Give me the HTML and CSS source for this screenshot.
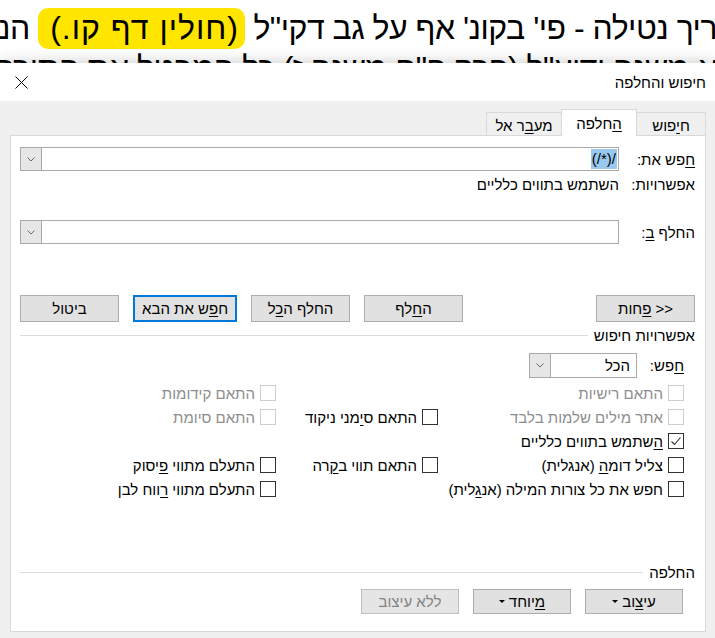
FILE: index.html
```html
<!DOCTYPE html>
<html lang="he" dir="rtl">

<head>
  <meta charset="UTF-8">
  <meta name="viewport" content="width=device-width, initial-scale=1">
  <title>חיפוש והחלפה</title>
  <link rel="stylesheet" href="styles.css">
</head>

<body>
  <!-- document text behind the dialog -->
  <div class="doc">
    <p class="doc_line">ריך נטילה - פי' בקונ' אף על גב דקי"ל <span class="doc_mark">(חולין דף קו.)</span> הנה אמרו</p>
    <p class="doc_line">א משנה ידוע"ל (פרק פ"ח משנה ז) כל המבטל את התורה מעושר</p>
  </div>

  <div class="fr_dialog">
    <div class="fr_titlebar">
      <span class="fr_title">חיפוש והחלפה</span>
      <span class="fr_close">
        <svg width="13" height="13" viewBox="0 0 13 13">
          <path d="M0.5 0.5 L12.5 12.5 M12.5 0.5 L0.5 12.5" stroke="#000" stroke-width="1" fill="none" />
        </svg>
      </span>
    </div>

    <div class="fr_body">
      <div class="fr_tabs">
        <div class="fr_tab"><span>ח<u>י</u>פוש</span></div>
        <div class="fr_tab fr_tab_active"><span><u>ה</u>חלפה</span></div>
        <div class="fr_tab"><span>מע<u>ב</u>ר אל</span></div>
      </div>

      <div class="fr_panel">
        <div class="fr_row fr_row_find">
          <span class="fr_label"><u>ח</u>פש את:</span>
          <div class="fr_combo fr_combo_wide">
            <span class="fr_combo_text"><span class="fr_selected" dir="ltr">(/*)/</span></span>
            <span class="fr_combo_btn">
              <svg width="8" height="5" viewBox="0 0 8 5">
                <polyline points="0.5,0.5 4,4 7.5,0.5" stroke="#6a6a6a" stroke-width="1" fill="none" />
              </svg>
            </span>
          </div>
        </div>

        <div class="fr_row fr_row_options">
          <span class="fr_label">אפשרויות:</span>
          <span class="fr_value">השתמש בתווים כלליים</span>
        </div>

        <div class="fr_row fr_row_replace">
          <span class="fr_label">החלף <u>ב</u>:</span>
          <div class="fr_combo fr_combo_wide">
            <span class="fr_combo_text"></span>
            <span class="fr_combo_btn">
              <svg width="8" height="5" viewBox="0 0 8 5">
                <polyline points="0.5,0.5 4,4 7.5,0.5" stroke="#6a6a6a" stroke-width="1" fill="none" />
              </svg>
            </span>
          </div>
        </div>

        <div class="fr_buttons fr_buttons_main">
          <button class="fr_btn fr_btn_less"><span>&lt;&lt; <u>פ</u>חות</span></button>
          <button class="fr_btn"><span>ה<u>ח</u>לף</span></button>
          <button class="fr_btn"><span>החלף ה<u>כ</u>ל</span></button>
          <button class="fr_btn fr_btn_focus"><span>ח<u>פ</u>ש את הבא</span></button>
          <button class="fr_btn"><span>ביטול</span></button>
        </div>

        <div class="fr_section fr_section_search">
          <span>אפשרויות חיפוש</span>
          <span class="fr_section_line"></span>
        </div>

        <div class="fr_search_opts">
          <div class="fr_row fr_row_dir">
            <span class="fr_label fr_label_short"><u>ח</u>פש:</span>
            <div class="fr_combo fr_combo_small">
              <span class="fr_combo_text">הכל</span>
              <span class="fr_combo_btn">
                <svg width="8" height="5" viewBox="0 0 8 5">
                  <polyline points="0.5,0.5 4,4 7.5,0.5" stroke="#6a6a6a" stroke-width="1" fill="none" />
                </svg>
              </span>
            </div>
          </div>

          <div class="fr_checks">
            <div class="fr_check fr_disabled"><span class="fr_box"></span><span>התאם רישיות</span></div>
            <div></div>
            <div class="fr_check fr_disabled"><span class="fr_box"></span><span>התאם קידומות</span></div>

            <div class="fr_check fr_disabled"><span class="fr_box"></span><span>אתר מילים שלמות בלבד</span></div>
            <div class="fr_check"><span class="fr_box"></span><span>התאם ס<u>י</u>מני ניקוד</span></div>
            <div class="fr_check fr_disabled"><span class="fr_box"></span><span>התאם סיומת</span></div>

            <div class="fr_check">
              <span class="fr_box">
                <svg width="14" height="14" viewBox="0 0 14 14">
                  <polyline points="2.5,7.5 5.5,10.5 11.5,3.5" stroke="#333" stroke-width="1.1" fill="none" />
                </svg>
              </span>
              <span><u>ה</u>שתמש בתווים כלליים</span>
            </div>
            <div></div>
            <div></div>

            <div class="fr_check"><span class="fr_box"></span><span>צליל דומ<u>ה</u> (אנגלית)</span></div>
            <div class="fr_check"><span class="fr_box"></span><span>התאם תווי ב<u>ק</u>רה</span></div>
            <div class="fr_check"><span class="fr_box"></span><span>התעלם מתווי <u>פ</u>יסוק</span></div>

            <div class="fr_check"><span class="fr_box"></span><span>חפש את כל צורות המילה (אנ<u>ג</u>לית)</span></div>
            <div></div>
            <div class="fr_check"><span class="fr_box"></span><span>התעלם מתווי <u>ר</u>ווח לבן</span></div>
          </div>
        </div>

        <div class="fr_section fr_section_replace">
          <span>החלפה</span>
          <span class="fr_section_line"></span>
        </div>

        <div class="fr_buttons fr_buttons_format">
          <button class="fr_btn"><span>עי<u>צ</u>וב</span><span class="fr_caret"></span></button>
          <button class="fr_btn"><span><u>מ</u>יוחד</span><span class="fr_caret"></span></button>
          <button class="fr_btn fr_btn_disabled"><span>ללא עיצוב</span></button>
        </div>
      </div>
    </div>
  </div>
</body>

</html>
```

FILE: styles.css
```css
* {
  box-sizing: border-box;
}

body {
  margin: 0;
  background: #fff;
  font-family: "Liberation Sans", "DejaVu Sans", sans-serif;
  overflow: hidden;
}

/* document behind the dialog */

.doc {
  height: 63px;
  overflow: hidden;
  padding-top: 8px;
}

.doc_line {
  margin: 0 -2px 0 0;
  font-size: 32px;
  line-height: 40px;
  letter-spacing: -0.5px;
  white-space: nowrap;
  color: #000;
}

.doc_mark {
  background: #ffe500;
  border-radius: 10px;
  padding: 2px 6px 3px 12px;
  letter-spacing: 1px;
}

/* dialog */

.fr_dialog {
  position: relative;
  background: #f0f0f0;
  box-shadow: 0 -2px 12px rgba(0, 0, 0, 0.18);
  font-size: 15px;
  color: #000;
}

.fr_titlebar {
  height: 38px;
  background: #fff;
  display: flex;
  align-items: center;
  justify-content: space-between;
  padding: 0 9px 0 15px;
}

.fr_close {
  display: flex;
}

.fr_body {
  padding: 8px 9px 6px 10px;
}

u {
  text-decoration-thickness: 1px;
  text-underline-offset: 2px;
}

/* tabs */

.fr_tabs {
  display: flex;
  align-items: flex-end;
  margin-bottom: -1px;
  position: relative;
  z-index: 1;
}

.fr_tab {
  width: 76px;
  height: 23px;
  margin-bottom: 1px;
  margin-right: -1px;
  border: 1px solid #d9d9d9;
  border-bottom: none;
  background: #f0f0f0;
  display: flex;
  align-items: center;
  justify-content: center;
  padding-top: 2px;
}

.fr_tab:first-child {
  width: 70px;
  margin-right: 0;
}

.fr_tab_active {
  height: 27px;
  margin-bottom: 0;
  background: #fff;
  position: relative;
  z-index: 1;
  padding-top: 0;
}

/* panel */

.fr_panel {
  height: 497px;
  background: #fff;
  border: 1px solid #d9d9d9;
  padding: 0 10px 0 9px;
}

.fr_row {
  display: flex;
  align-items: center;
}

.fr_label {
  width: 76px;
  flex-shrink: 0;
}

.fr_row_find {
  margin-top: 11px;
  height: 24px;
}

.fr_row_options {
  margin-top: 3px;
  height: 20px;
}

.fr_row_replace {
  margin-top: 26px;
  height: 24px;
}

.fr_combo {
  display: flex;
  height: 100%;
  border: 1px solid #a9a9a9;
  background: #fff;
}

.fr_combo_wide {
  flex: 1;
}

.fr_combo_text {
  flex: 1;
  display: flex;
  align-items: center;
  padding-right: 1px;
  white-space: nowrap;
}

.fr_selected {
  background: #99c9ef;
  padding: 1px 1px 2px;
}

.fr_combo_btn {
  width: 21px;
  background: #e6e6e6;
  border-right: 1px solid #a9a9a9;
  display: flex;
  align-items: center;
  justify-content: center;
}

/* buttons */

.fr_buttons {
  display: flex;
  gap: 14px;
}

.fr_buttons_main {
  margin-top: 51px;
}

.fr_btn {
  width: 99px;
  height: 27px;
  padding: 0;
  background: #e1e1e1;
  border: 1px solid #adadad;
  font-family: inherit;
  font-size: 15px;
  color: #000;
  display: flex;
  align-items: center;
  justify-content: center;
  gap: 4px;
  white-space: nowrap;
}

.fr_btn_less {
  margin-left: auto;
}

.fr_btn_focus {
  width: 104px;
  border: 2px solid #0078d7;
}

.fr_btn_disabled {
  color: #838383;
  border-color: #bfbfbf;
  background: #e5e5e5;
}

.fr_caret {
  width: 0;
  height: 0;
  border-left: 3px solid transparent;
  border-right: 3px solid transparent;
  border-top: 3px solid #000;
}

/* section headers */

.fr_section {
  display: flex;
  align-items: center;
  height: 18px;
}

.fr_section_line {
  flex: 1;
  height: 1px;
  background: #dcdcdc;
  margin-right: 6px;
}

.fr_section_search {
  margin-top: 4px;
}

.fr_section_replace {
  margin-top: 62px;
}

/* search options */

.fr_search_opts {
  margin-right: 11px;
}

.fr_row_dir {
  margin-top: 9px;
  height: 25px;
}

.fr_label_short {
  width: 47px;
}

.fr_combo_small {
  width: 108px;
}

.fr_combo_small .fr_combo_text {
  padding-right: 6px;
}

.fr_checks {
  margin-top: 3px;
  display: grid;
  grid-template-columns: 246px 162px 1fr;
  grid-auto-rows: 24px;
}

.fr_check {
  display: flex;
  align-items: center;
  white-space: nowrap;
}

.fr_box {
  width: 16px;
  height: 16px;
  border: 1px solid #333;
  background: #fff;
  margin-left: 5px;
  display: flex;
  align-items: center;
  justify-content: center;
  flex-shrink: 0;
}

.fr_disabled {
  color: #8d8d8d;
}

.fr_disabled .fr_box {
  border-color: #cccccc;
}

.fr_buttons_format {
  margin-top: 8px;
  margin-right: 12px;
}

.fr_buttons_format .fr_btn {
  width: 98px;
  height: 25px;
}
```
